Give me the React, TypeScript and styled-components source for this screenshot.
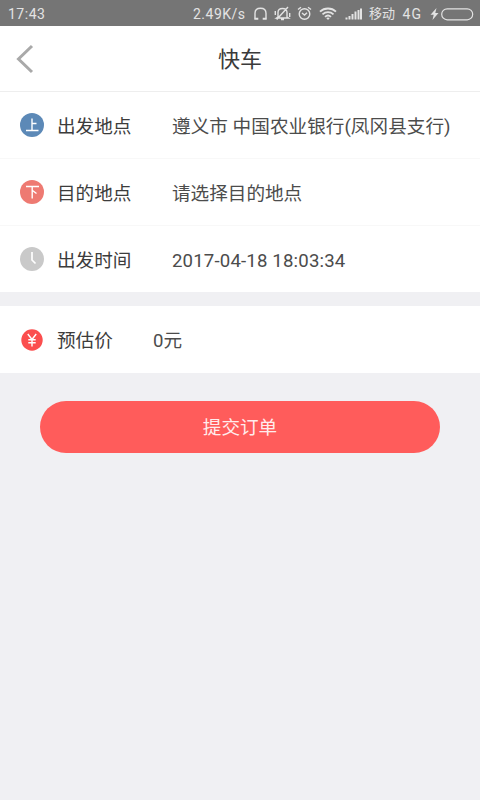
import React from "react";
import styled, { createGlobalStyle } from "styled-components";

const GlobalStyle = createGlobalStyle`
  * { box-sizing: border-box; }
  body {
    margin: 0;
    background: #f0f0f3;
    font-family: Roboto, "Noto Sans CJK SC", sans-serif;
  }
`;

const Screen = styled.main`
  display: flex;
  flex-direction: column;
  width: 480px;
  height: 800px;
  background: #f0f0f3;
  overflow: hidden;
`;

const StatusBar = styled.div`
  display: flex;
  align-items: center;
  flex: none;
  height: 26px;
  padding: 2px 6px 0 8px;
  background: #757575;
  color: #e3e3e3;
  font-size: 14px;
  line-height: 24px;
  white-space: nowrap;
`;

const StatusText = styled.span<{ $width: number; $size?: number; $spacing?: number }>`
  flex: none;
  width: ${(p) => p.$width}px;
  font-size: ${(p) => p.$size ?? 14}px;
  letter-spacing: ${(p) => p.$spacing ?? 0}px;
`;

const StatusIcon = styled.svg<{ $gap?: number }>`
  flex: none;
  display: block;
  margin-right: ${(p) => p.$gap ?? 0}px;
  fill: none;
  stroke: #e3e3e3;
  stroke-width: 1.4;
`;

const Header = styled.header`
  display: grid;
  grid-template-columns: 52px 1fr 52px;
  align-items: center;
  flex: none;
  height: 66px;
  border-bottom: 1px solid #eeeeee;
  background: #fff;
`;

const BackButton = styled.button`
  display: flex;
  align-items: center;
  height: 48px;
  padding: 0 0 0 15px;
  border: 0;
  background: none;
`;

const Title = styled.h1`
  margin: 0;
  padding-top: 2px;
  color: #3a3a3a;
  font-size: 22px;
  font-weight: 400;
  line-height: 32px;
  text-align: center;
`;

const Group = styled.section`
  flex: none;
  margin-bottom: 14px;
  background: #fff;
`;

const Row = styled.div<{ $height: number }>`
  display: flex;
  align-items: center;
  height: ${(p) => p.$height}px;
  padding-left: 19px;
  font-size: 18.6px;
  line-height: 28px;
  white-space: nowrap;

  & + & {
    border-top: 1px solid #f8f8f8;
  }
`;

const RowIcon = styled.svg`
  flex: none;
  width: 26px;
  height: 26px;
  margin-right: 12px;
  fill: none;
  stroke: #fff;
  stroke-width: 1.4;
`;

const Label = styled.span<{ $width: number }>`
  flex: none;
  width: ${(p) => p.$width}px;
  padding-top: 3px;
  color: #3c3c3c;
`;

const Value = styled.span<{ $spacing?: number }>`
  padding-top: 3px;
  color: #4c4c4c;
  letter-spacing: ${(p) => p.$spacing ?? 0}px;
`;

const SubmitButton = styled.button`
  flex: none;
  height: 52px;
  margin: 14px 40px 0;
  padding: 3px 0 0;
  border: 0;
  border-radius: 26px;
  background: #ff5c5b;
  color: #ffecec;
  font-family: inherit;
  font-size: 18.6px;
  line-height: 49px;
`;

export default function App() {
  return (
    <>
      <GlobalStyle />
      <Screen>
        <StatusBar>
          <StatusText $width={185} $spacing={0.5}>17:43</StatusText>
          <StatusText $width={60} $spacing={0.5}>2.49K/s</StatusText>
          <StatusIcon width="15" height="16" viewBox="0 0 15 16" $gap={6}>
            <path d="M2 12.500V7.200C2 4 4.200 2.200 7.500 2.200s5.500 1.800 5.500 5v5.300" />
            <path d="M1.300 12.700h4M9.700 12.700h4" strokeWidth="2" />
          </StatusIcon>
          <StatusIcon width="17" height="16" viewBox="0 0 17 16" $gap={6}>
            <path d="M4 11V6.500C4 4 6 2.500 8.500 2.500S13 4 13 6.500V11l1.500 1h-12zM7 13.500h3M14 1 2.700 13.500M1.300 5v4M15.700 7v4" />
          </StatusIcon>
          <StatusIcon width="15" height="16" viewBox="0 0 15 16" $gap={7}>
            <circle cx="7.500" cy="8" r="5.300" />
            <path d="M1 3.500 4 1.200M14 3.500l-3-2.300M5 7l2.500 2L10 6.800" />
          </StatusIcon>
          <StatusIcon width="18" height="14" viewBox="0 0 18 14" $gap={8}>
            <path d="M1 4.700c4.500-4.300 11.500-4.300 16 0M3.500 7.300c3.200-3 7.800-3 11 0M6 9.800c1.700-1.500 4.300-1.500 6 0" strokeWidth="1.800" />
            <path d="m7.200 11 1.800 2 1.800-2c-1-.8-2.600-.8-3.600 0z" fill="#e3e3e3" stroke="none" />
          </StatusIcon>
          <StatusIcon width="17" height="14" viewBox="0 0 17 14" $gap={7}>
            <path d="M1.500 12.500v-2M4.500 12.500V9M7.500 12.500V7M10.500 12.500V4.500M13.500 12.500V3M16 12.500V1.500" strokeWidth="2" />
          </StatusIcon>
          <StatusText $width={33.5} $size={13}>移动</StatusText>
          <StatusText $width={27.5} $spacing={1.2}>4G</StatusText>
          <StatusIcon width="9" height="14" viewBox="0 0 9 14" $gap={2}>
            <path d="M6.500 1 .5 7.800h3.200L2.500 13l6-7H5.300z" fill="#e3e3e3" stroke="none" />
          </StatusIcon>
          <StatusIcon width="33" height="13" viewBox="0 0 33 13">
            <rect x=".7" y=".8" width="31" height="11" rx="5.500" strokeWidth="1.200" />
          </StatusIcon>
        </StatusBar>

        <Header>
          <BackButton aria-label="返回">
            <svg width="20" height="30" viewBox="0 0 20 30" fill="none" stroke="#a9a9a9" strokeWidth="3">
              <path d="M17 2 3.500 15 17 28" />
            </svg>
          </BackButton>
          <Title>快车</Title>
        </Header>

        <Group>
          <Row $height={66}>
            <RowIcon viewBox="0 0 26 26">
              <circle cx="13" cy="13" r="12" fill="#5c89b7" stroke="none" />
              <path d="M13 6.500v12M13 11.500h4.500M7 18.500h12.500" />
            </RowIcon>
            <Label $width={115}>出发地点</Label>
            <Value $spacing={0.05}>遵义市 中国农业银行(凤冈县支行)</Value>
          </Row>
          <Row $height={67}>
            <RowIcon viewBox="0 0 26 26">
              <circle cx="13" cy="13" r="12" fill="#ee7a72" stroke="none" />
              <path d="M7 7.500h13M13.200 7.500v12M13.500 11.500l4 3" />
            </RowIcon>
            <Label $width={115}>目的地点</Label>
            <Value>请选择目的地点</Value>
          </Row>
          <Row $height={67}>
            <RowIcon viewBox="0 0 26 26">
              <circle cx="13" cy="13" r="12" fill="#c9c9c9" stroke="none" />
              <path d="M13 6v8l3.500 3.500" strokeWidth="1.700" />
            </RowIcon>
            <Label $width={115}>出发时间</Label>
            <Value $spacing={0.17}>2017-04-18 18:03:34</Value>
          </Row>
        </Group>

        <Group>
          <Row $height={67}>
            <RowIcon viewBox="0 0 26 26">
              <circle cx="13" cy="13" r="10.700" fill="#fb4e4e" stroke="none" />
              <path d="m8.800 7 4.200 5.500L17.200 7M13 12.500v7M9.300 12.800h7.400M9.300 15.800h7.400" />
            </RowIcon>
            <Label $width={96}>预估价</Label>
            <Value>0元</Value>
          </Row>
        </Group>

        <SubmitButton>提交订单</SubmitButton>
      </Screen>
    </>
  );
}
